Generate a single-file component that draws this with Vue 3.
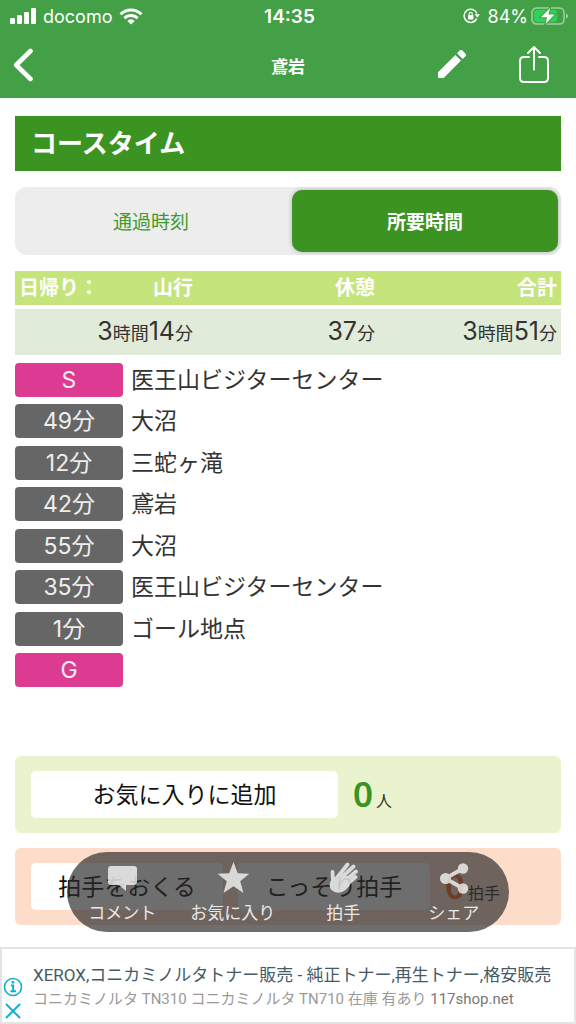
<script setup>
const summary = [
  { label: '山行', lead: '日帰り：', parts: [['3', '時間'], ['14', '分']] },
  { label: '休憩', parts: [['37', '分']] },
  { label: '合計', parts: [['3', '時間'], ['51', '分']] },
]
const stops = [
  { time: 'S', place: '医王山ビジターセンター', mark: true },
  { time: '49分', place: '大沼' },
  { time: '12分', place: '三蛇ヶ滝' },
  { time: '42分', place: '鳶岩' },
  { time: '55分', place: '大沼' },
  { time: '35分', place: '医王山ビジターセンター' },
  { time: '1分', place: 'ゴール地点' },
  { time: 'G', place: '', mark: true },
]
</script>

<template>
  <div class="page">
    <header class="top">
      <div class="status">
        <div class="carrier">
          <svg width="26" height="16" viewBox="0 0 26 16" fill="#fff">
            <rect x="0" y="10" width="5" height="6" rx="1.2" />
            <rect x="7" y="7" width="5" height="9" rx="1.2" />
            <rect x="14" y="4" width="5" height="12" rx="1.2" />
            <rect x="21" y="0" width="5" height="16" rx="1.2" />
          </svg>
          <span>docomo</span>
          <svg width="24" height="17" viewBox="0 0 24 17" fill="none" stroke="#fff" stroke-width="3">
            <path d="M1.5 6.2a15 15 0 0 1 21 0" />
            <path d="M5.4 10.3a9.4 9.4 0 0 1 13.2 0" />
            <path d="M12 16.6 8.3 12.9a5.2 5.2 0 0 1 7.4 0z" fill="#fff" stroke="none" />
          </svg>
        </div>
        <time class="clock">14:35</time>
        <div class="power">
          <svg width="17" height="16" viewBox="0 0 17 16" fill="none" stroke="#fff" stroke-width="1.5">
            <path d="M13.7 10.6A6.6 6.6 0 1 1 13.9 5.6" />
            <path d="M11.6 6.3h5.2l-2.4 3.4z" fill="#fff" stroke="none" />
            <rect x="5" y="7" width="5.4" height="4.4" rx=".6" fill="#fff" stroke="none" />
            <path d="M6.2 7V5.7a1.5 1.5 0 0 1 3 0V7" stroke-width="1.1" />
          </svg>
          <span class="percent">84%</span>
          <svg width="38" height="19" viewBox="0 0 38 19">
            <rect x="1" y="1" width="32" height="16" rx="4.5" fill="none" stroke="#fff" stroke-opacity=".5" stroke-width="1.5" />
            <rect x="3" y="3" width="23" height="12" rx="2.5" fill="#30d158" />
            <path d="M35 6.500q2 .8 2 2.500t-2 2.500z" fill="#fff" fill-opacity=".5" />
            <path d="M19 1 10 10.200h6L14.500 17l9-9.600h-6z" fill="#fff" stroke="#43a047" stroke-width="2" paint-order="stroke" />
          </svg>
        </div>
      </div>
      <nav class="nav">
        <button class="icon-button" type="button" aria-label="戻る">
          <svg width="21" height="34" viewBox="0 0 21 34" fill="none" stroke="#fff" stroke-width="4.6" stroke-linecap="round" stroke-linejoin="round">
            <path d="M18.500 3 4.200 17l14.300 14" />
          </svg>
        </button>
        <h1 class="screen-title">鳶岩</h1>
        <div class="actions">
          <button class="icon-button" type="button" aria-label="編集">
            <svg width="30" height="30" viewBox="0 0 30 30" fill="#fff">
              <path d="M1 22.200 18.300 5l5.700 5.600L6.700 28H1z" />
              <path d="m20 3.200 2.700-2.700q1.300-1.200 2.600 0l3.200 3.200q1.200 1.300 0 2.600L25.700 9z" />
            </svg>
          </button>
          <button class="icon-button" type="button" aria-label="共有">
            <svg width="30" height="38" viewBox="0 0 30 38" fill="none" stroke="#fff" stroke-width="2" stroke-linecap="round">
              <path d="M10 11H5Q1 11 1 15v17q0 4 4 4h20q4 0 4-4V15q0-4-4-4h-5" />
              <path d="M15 23.500V1.200M9 7l6-6 6 6" />
            </svg>
          </button>
        </div>
      </nav>
    </header>

    <main class="content">
      <h2 class="section-title">コースタイム</h2>

      <div class="segment">
        <button type="button">通過時刻</button>
        <button type="button" class="active">所要時間</button>
      </div>

      <table class="summary">
        <thead>
          <tr>
            <th v-for="s in summary" :key="s.label" scope="col">
              <div class="head-cell"><span>{{ s.lead }}</span><span>{{ s.label }}</span></div>
            </th>
          </tr>
        </thead>
        <tbody>
          <tr>
            <td v-for="s in summary" :key="s.label">
              <template v-for="p in s.parts" :key="p[1]">{{ p[0] }}<small>{{ p[1] }}</small></template>
            </td>
          </tr>
        </tbody>
      </table>

      <ol class="stops">
        <li v-for="(s, i) in stops" :key="i">
          <span class="chip" :class="{ mark: s.mark }">{{ s.time }}</span>
          <span>{{ s.place }}</span>
        </li>
      </ol>

      <section class="panel favorite">
        <button class="wide" type="button">お気に入りに追加</button>
        <p class="count"><b>0</b><span>人</span></p>
      </section>
      <section class="panel clap">
        <button type="button">拍手をおくる</button>
        <button type="button">こっそり拍手</button>
        <p class="count"><b>0</b><span>拍手</span></p>
      </section>
    </main>

    <footer class="bottom">
      <nav class="floating">
        <button type="button">
          <svg width="32" height="32" viewBox="0 0 32 32" fill="#fff">
            <path d="M5 4h23q3 0 3 3v13q0 3-3 3h-8v6l-7-6H5q-3 0-3-3V7q0-3 3-3z" />
          </svg>
          <span>コメント</span>
        </button>
        <button type="button">
          <svg width="32" height="32" viewBox="0 0 32 32" fill="#fff">
            <path d="m16.500 0 4.300 11.300 11.700.4-9.300 7.500L26.500 31l-10-6.700L6.500 31l3.300-11.800L.5 11.700l11.700-.4z" />
          </svg>
          <span>お気に入り</span>
        </button>
        <button type="button">
          <svg width="32" height="32" viewBox="0 0 32 32" fill="none" stroke="#fff" stroke-linecap="round" stroke-linejoin="round" stroke-width="3.800">
            <path d="M5.500 10 6 20M9 17 20.500 2.500M13 17 26.500 4.500M17 19.500 29 9.500M18 24l10.500-9" />
            <path d="m12 13-7.500 6q-2.500 5 .5 8.500 4 3.500 9 2 4-1.200 8-6.500l-1-8z" fill="#fff" stroke-width="1.500" />
          </svg>
          <span>拍手</span>
        </button>
        <button type="button">
          <svg width="32" height="32" viewBox="0 0 32 32" fill="#fff">
            <path d="M7.500 16.500 25 6.500M7.500 16.500 25 26.500" fill="none" stroke="#fff" stroke-width="3.800" />
            <circle cx="7.500" cy="16.500" r="5.500" />
            <circle cx="25" cy="6.500" r="5.200" />
            <circle cx="25" cy="26.500" r="5.200" />
          </svg>
          <span>シェア</span>
        </button>
      </nav>
      <aside class="ad">
        <div class="ad-controls">
          <button type="button" aria-label="広告情報">
            <svg width="20" height="20" viewBox="0 0 20 20" fill="none" stroke="#12b0d0" stroke-width="1.600">
              <circle cx="10" cy="10" r="8.500" />
              <path d="M8 8.500h2.200V14M7.500 14.200h5.500" stroke-width="2" />
              <circle cx="10" cy="5.300" r="1.400" fill="#12b0d0" stroke="none" />
            </svg>
          </button>
          <button type="button" aria-label="広告を閉じる">
            <svg width="20" height="16" viewBox="0 0 20 16" fill="none" stroke="#12b0d0" stroke-width="2">
              <path d="m3 1 14 14M17 1 3 15" />
            </svg>
          </button>
        </div>
        <a class="ad-link" href="#">
          <span class="ad-title">XEROX,コニカミノルタトナー販売 - 純正トナー,再生トナー,格安販売</span>
          <span class="ad-text">コニカミノルタ TN310 コニカミノルタ TN710 在庫 有あり <em>117shop.net</em></span>
        </a>
      </aside>
    </footer>
  </div>
</template>

<style>
body {
  margin: 0;
  background: #fff;
}
</style>

<style scoped>
.page {
  display: flex;
  flex-direction: column;
  min-height: 100vh;
  color: #333;
  font-family: Inter, "Noto Sans CJK JP", sans-serif;
}
h1, h2, p, ol {
  margin: 0;
  padding: 0;
}
button {
  margin: 0;
  padding: 0;
  border: 0;
  background: none;
  font-family: inherit;
  color: inherit;
}
svg {
  display: block;
  flex: none;
}

.top {
  background: #43a047;
  color: #fff;
  height: 98px;
}
.status,
.nav {
  display: grid;
  grid-template-columns: 1fr auto 1fr;
  align-items: center;
}
.status {
  height: 32px;
  padding: 0 7px 0 10px;
  font-size: 18px;
}
.carrier,
.power,
.actions {
  display: flex;
  align-items: center;
}
.carrier {
  gap: 7px;
}
.clock {
  font-size: 19px;
  font-weight: 600;
}
.power {
  justify-content: flex-end;
}
.percent {
  margin: 0 3px 0 8px;
}
.nav {
  height: 66px;
  padding: 0 27px 0 12px;
}
.nav > .icon-button {
  justify-self: start;
}
.screen-title {
  font-size: 17px;
  font-weight: 700;
  padding-left: 15px;
}
.actions {
  justify-content: flex-end;
  gap: 52px;
}

.content {
  padding: 18px 15px 0;
}
.section-title {
  padding: 0 16px;
  background: #3b9322;
  color: #fff;
  font-size: 26px;
  line-height: 55px;
  font-weight: 600;
}
.segment {
  display: grid;
  grid-template-columns: 1fr 1fr;
  margin-top: 16px;
  padding: 3px;
  gap: 8px;
  border-radius: 12px;
  background: #ededed;
}
.segment button {
  height: 62px;
  padding-bottom: 2px;
  border-radius: 10px;
  color: #3f9b2c;
  font-size: 19px;
}
.segment .active {
  background: #3b9322;
  color: #fff;
  font-weight: 600;
  box-shadow: 0 0 5px rgba(0, 0, 0, 0.25);
}

.summary {
  width: 100%;
  margin-top: 12px;
  border-spacing: 0 4px;
  table-layout: fixed;
}
.summary th,
.summary td {
  padding: 0 4px;
}
.summary th {
  height: 34px;
  background: #c5e47c;
  color: #fff;
  font-size: 20px;
  line-height: 34px;
  font-weight: 600;
}
.head-cell {
  display: flex;
  justify-content: space-between;
}
.summary td {
  height: 46px;
  background: #e0ecd9;
  font-size: 25px;
  line-height: 40px;
  text-align: right;
}
.summary small {
  font-size: 18px;
}

.stops {
  display: flex;
  flex-direction: column;
  justify-content: space-between;
  height: 324px;
  margin-top: 4px;
  list-style: none;
}
.stops li {
  display: flex;
  gap: 8px;
  font-size: 23px;
  line-height: 34px;
}
.chip {
  width: 108px;
  border-radius: 4px;
  background: #666;
  color: #eee;
  text-align: center;
}
.chip.mark {
  background: #dd3b92;
}

.panel {
  display: flex;
  align-items: center;
  height: 77px;
  padding: 0 16px;
  gap: 15px;
  border-radius: 6px;
}
.panel button {
  flex: 0 0 192px;
  height: 47px;
  padding-bottom: 3px;
  border-radius: 5px;
  background: #fff;
  color: #111;
  font-size: 23px;
}
.panel .wide {
  flex-basis: 307px;
}
.favorite {
  margin-top: 69px;
  background: #e9f4cf;
}
.clap {
  margin-top: 15px;
  background: #fdddca;
}
.count {
  display: flex;
  align-items: baseline;
  gap: 3px;
  padding-top: 5px;
  font-size: 16px;
  line-height: 47px;
  white-space: nowrap;
}
.count b {
  color: #3b9322;
  font-family: "Noto Sans", sans-serif;
  font-size: 35px;
  font-weight: 600;
}
.clap .count b {
  color: #f07020;
}

.bottom {
  position: relative;
  margin-top: auto;
}
.floating {
  position: absolute;
  right: 67px;
  bottom: 92px;
  left: 67px;
  display: grid;
  grid-template-columns: repeat(4, 1fr);
  height: 80px;
  border-radius: 40px;
  background: rgba(42, 42, 42, 0.68);
}
.floating button {
  display: flex;
  flex-direction: column;
  align-items: center;
  padding-top: 10px;
  gap: 7px;
  color: #e8e8e8;
  font-size: 17px;
  line-height: 24px;
}
.floating svg {
  opacity: 0.75;
}
.ad {
  display: flex;
  align-items: center;
  height: 73px;
  border: 2px solid #e4e4e4;
  background: #fff;
}
.ad-controls {
  display: flex;
  flex-direction: column;
  gap: 6px;
  padding-top: 24px;
  width: 31px;
}
.ad-controls button {
  width: 22px;
}
.ad-controls svg {
  margin: 0 auto;
}
.ad-link {
  display: flex;
  flex-direction: column;
  padding-top: 2px;
  font-family: Roboto, "Noto Sans CJK JP", sans-serif;
  text-decoration: none;
  white-space: nowrap;
}
.ad-title {
  color: #455a64;
  font-size: 17px;
  line-height: 24px;
}
.ad-text {
  color: #999;
  font-size: 15px;
  line-height: 24px;
}
.ad-text em {
  color: #777;
  font-style: normal;
}
</style>
